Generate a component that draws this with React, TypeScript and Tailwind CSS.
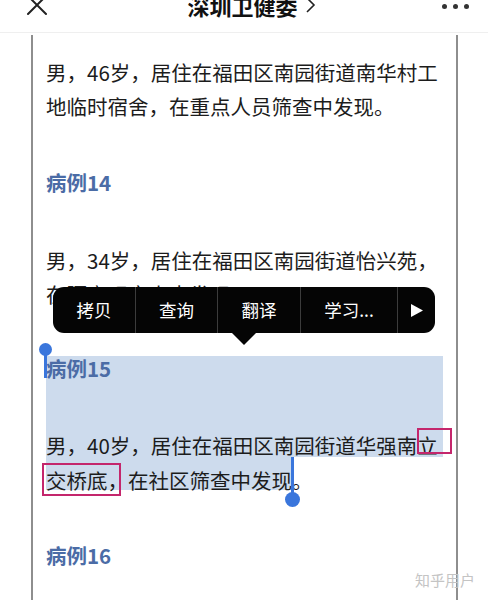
import React from 'react';

const menuItems = [
  { label: '拷贝', w: 'w-[82px]' },
  { label: '查询', w: 'w-[82px]' },
  { label: '翻译', w: 'w-[83px]' },
  { label: '学习...', w: 'w-[97px]' },
];

function Line({ children }: { children: React.ReactNode }) {
  return <div className="h-[34px] leading-[34px] whitespace-nowrap">{children}</div>;
}

function Heading({ children, className = '' }: { children: React.ReactNode; className?: string }) {
  return (
    <div className={`h-[34px] leading-[34px] font-bold text-[#4b6ca6] ${className}`}>{children}</div>
  );
}

export default function App() {
  return (
    <div className="relative w-[488px] h-[600px] overflow-hidden bg-white font-['Noto_Sans_CJK_SC',sans-serif] text-[#1c1c1c]">
      {/* top bar */}
      <div className="flex items-start h-[33px] border-b border-[#efefef]">
        <div className="flex-1 pl-[26px] -mt-[6px]">
          <svg width="22" height="22" viewBox="0 0 22 22" fill="none" stroke="#222" strokeWidth="2" strokeLinecap="round">
            <path d="M2 2 L20 20 M20 2 L2 20" />
          </svg>
        </div>
        <div className="flex items-center pl-[8px] -mt-[6px] h-[22px] text-[22px] leading-[22px] font-semibold text-[#111]">
          深圳卫健委
          <svg className="ml-[7px]" width="11" height="18" viewBox="0 0 11 18" fill="none" stroke="#222" strokeWidth="1.6">
            <path d="M2 2 L9 9 L2 16" />
          </svg>
        </div>
        <div className="flex-1 flex justify-end gap-[6px] pr-[19px] pt-[4px]">
          <span className="w-[5px] h-[5px] rounded-full bg-[#333]" />
          <span className="w-[5px] h-[5px] rounded-full bg-[#333]" />
          <span className="w-[5px] h-[5px] rounded-full bg-[#333]" />
        </div>
      </div>

      {/* article frame */}
      <div className="ml-[31px] mt-[2px] w-[427px] h-[565px] border-x-2 border-[#8e8e8e] pl-[13px] pt-[20px] text-[20.5px]">
        <Line>男，46岁，居住在福田区南园街道南华村工</Line>
        <Line>地临时宿舍，在重点人员筛查中发现。</Line>

        <Heading className="mt-[42px]">病例14</Heading>

        <div className="mt-[44px]">
          <Line>男，34岁，居住在福田区南园街道怡兴苑，</Line>
          <Line>在隔离观察点中发现。</Line>
        </div>

        {/* selected block */}
        <div className="relative mt-[45px] w-[397px] bg-[#cddbed]">
          <div className="absolute left-[-7px] top-[-13px] flex flex-col items-center">
            <span className="w-[13px] h-[13px] rounded-full bg-[#3a76dc]" />
            <span className="w-[2.5px] h-[24px] -mt-[2px] bg-[#3a76dc]" />
          </div>
          <div className="h-[24px] leading-[24px] font-bold text-[#4b6ca6]">病例15</div>
          <div className="mt-[53px] h-[24px] leading-[24px] whitespace-nowrap">
            男，40岁，居住在福田区南园街道华强南
            <span className="relative">
              立
              <span className="absolute left-[0px] top-[-2px] w-[35px] h-[26px] border-2 border-[#c4266c]" />
            </span>
          </div>
        </div>
        <div className="h-[35px] whitespace-nowrap">
          <span className="relative inline-block h-[33px] pt-[6px] leading-[34px] bg-[#cddbed]">
            <span className="relative">
              交桥底，
              <span className="absolute left-[-4px] top-[-2px] w-[79px] h-[33px] border-2 border-[#c4266c]" />
            </span>
            在社区筛查中发现
            <span className="absolute right-[-8px] top-0 flex flex-col items-center">
              <span className="w-[2.5px] h-[36px] bg-[#3a76dc]" />
              <span className="w-[15px] h-[15px] -mt-[1px] rounded-full bg-[#3a76dc]" />
            </span>
          </span>
          <span className="leading-[34px] align-top inline-block pt-[6px]">。</span>
        </div>

        <Heading className="mt-[46px]">病例16</Heading>
      </div>

      {/* edit menu */}
      <div className="absolute left-[53px] top-[287px]">
        <div className="flex items-stretch h-[46px] w-[382px] rounded-[11px] bg-[#050505] text-white text-[17.5px]">
          {menuItems.map((item, i) => (
            <div
              key={i}
              className={`${item.w} flex items-center justify-center ${i > 0 ? 'border-l border-[#3c3c3c]' : ''}`}
            >
              {item.label}
            </div>
          ))}
          <div className="flex-1 flex items-center justify-center border-l border-[#3c3c3c]">
            <svg width="12" height="13" viewBox="0 0 12 13">
              <path d="M0 0 L12 6.5 L0 13 Z" fill="#fff" />
            </svg>
          </div>
        </div>
        <svg className="ml-[179px]" width="24" height="12" viewBox="0 0 24 12">
          <path d="M0 0 L24 0 L12 12 Z" fill="#050505" />
        </svg>
      </div>

      {/* watermark */}
      <div className="absolute left-[415px] top-[571px] text-[15px] leading-[18px] text-[#c4c4c4]">知乎用户</div>
    </div>
  );
}
